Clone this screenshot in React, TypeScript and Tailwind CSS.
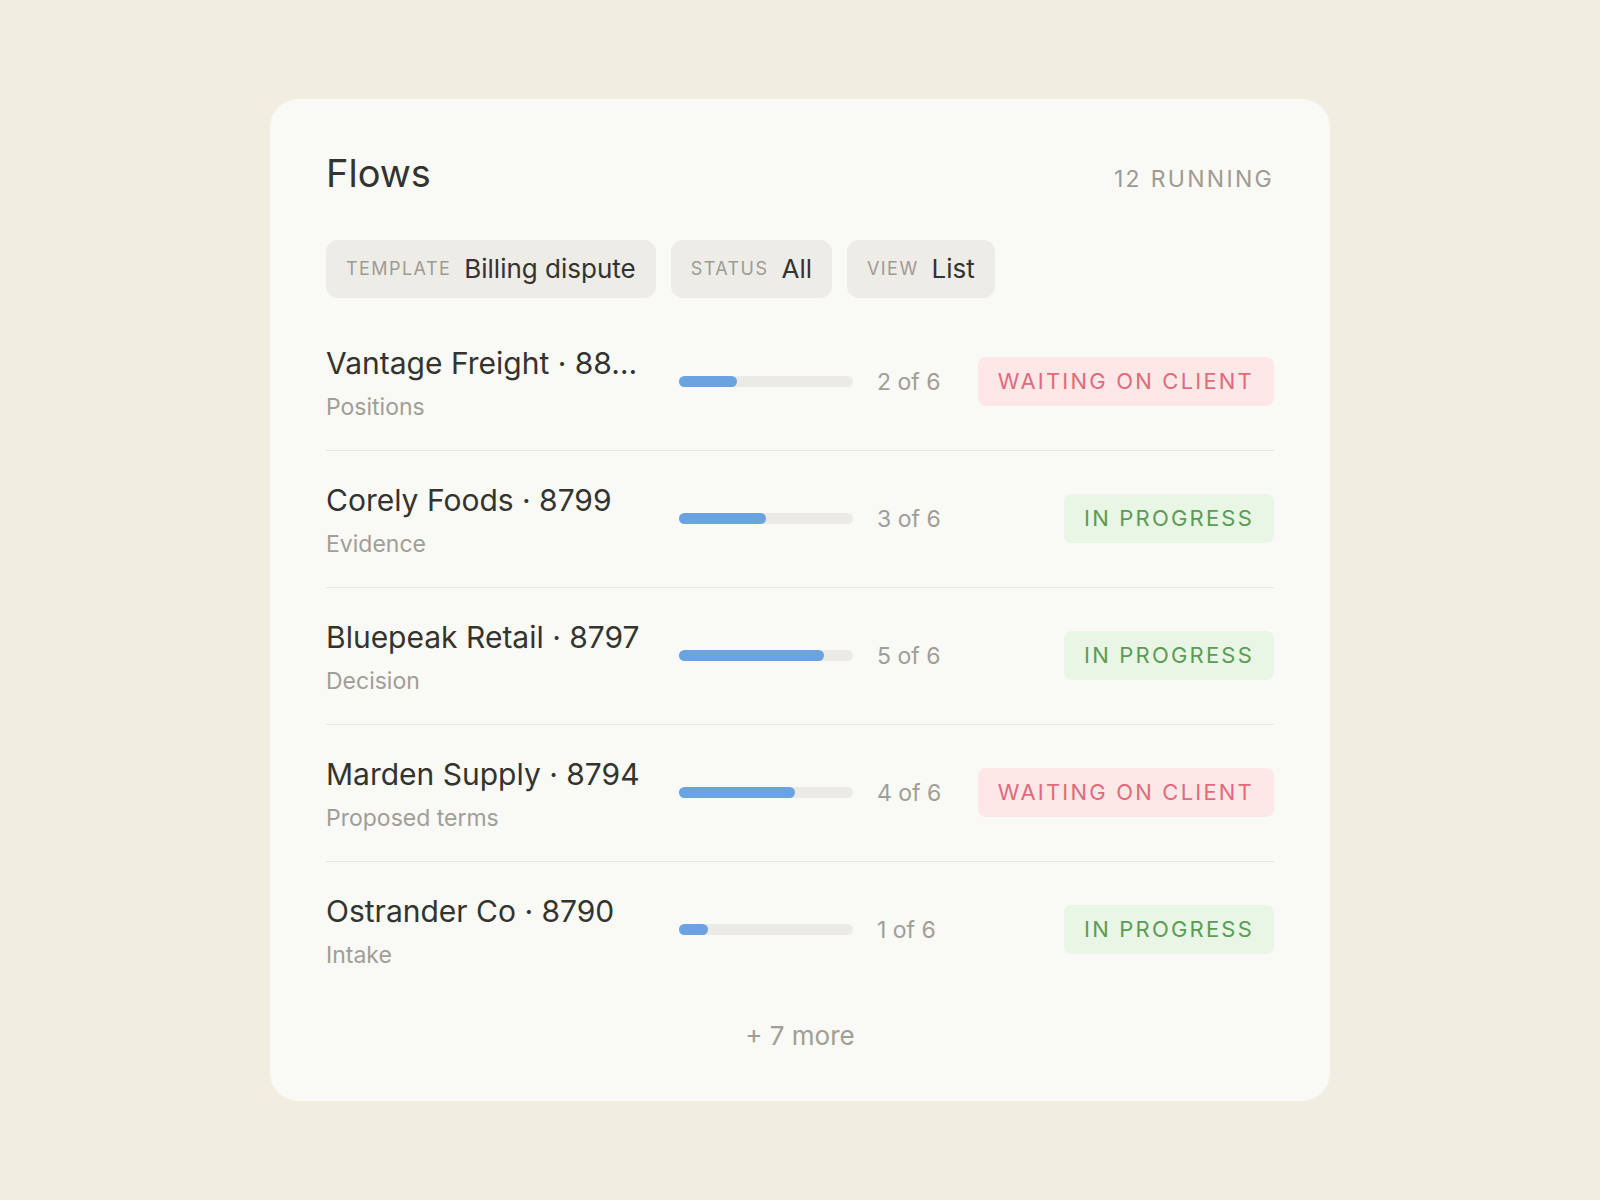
import React from 'react'

type Flow = {
  name: string
  step: string
  done: number
  status: 'waiting' | 'progress'
}

const flows: Flow[] = [
  { name: 'Vantage Freight · 88…', step: 'Positions', done: 2, status: 'waiting' },
  { name: 'Corely Foods · 8799', step: 'Evidence', done: 3, status: 'progress' },
  { name: 'Bluepeak Retail · 8797', step: 'Decision', done: 5, status: 'progress' },
  { name: 'Marden Supply · 8794', step: 'Proposed terms', done: 4, status: 'waiting' },
  { name: 'Ostrander Co · 8790', step: 'Intake', done: 1, status: 'progress' },
]

const TOTAL = 6

function Chip({ label, value }: { label: string; value: string }) {
  return (
    <div className="flex h-[58px] items-center gap-[13px] rounded-[12px] bg-[#edece7] px-[20px]">
      <span className="text-[18px] uppercase tracking-[0.08em] text-[#9d9b94]">{label}</span>
      <span className="text-[26px] text-[#33332f]">{value}</span>
    </div>
  )
}

function StatusBadge({ status }: { status: Flow['status'] }) {
  if (status === 'waiting') {
    return (
      <span className="flex h-[49px] items-center rounded-[8px] bg-[#fde8e7] px-[20px] text-[22px] tracking-[0.1em] text-[#e26a7b]">
        WAITING ON CLIENT
      </span>
    )
  }
  return (
    <span className="flex h-[49px] items-center rounded-[8px] bg-[#e9f5e5] px-[20px] text-[22px] tracking-[0.1em] text-[#5b9c54]">
      IN PROGRESS
    </span>
  )
}

export default function App() {
  return (
    <div
      className="flex min-h-screen items-center justify-center bg-[#f2ede1]"
      style={{ fontFamily: 'Inter, "Noto Sans", sans-serif' }}
    >
      <div className="w-[1060px] rounded-[28px] bg-[#f9f9f5] px-[56px] pt-[54px] pb-[47px]">
        {/* Header */}
        <div className="flex items-baseline justify-between">
          <h1 className="text-[38px] leading-[40px] text-[#33332f]">Flows</h1>
          <span className="text-[23px] tracking-[0.1em] text-[#9d9b94]">12 RUNNING</span>
        </div>

        {/* Filters */}
        <div className="mt-[43px] flex gap-[15px]">
          <Chip label="Template" value="Billing dispute" />
          <Chip label="Status" value="All" />
          <Chip label="View" value="List" />
        </div>

        {/* Rows */}
        <div className="mt-[16px]">
          {flows.map((f, i) => (
            <div
              key={f.name}
              className={`flex items-center pt-[30px] pb-[27px] ${i < flows.length - 1 ? 'border-b border-[#e6e5df]' : ''}`}
            >
              <div className="w-[330px] min-w-0">
                <p className="truncate text-[30px] leading-[38px] text-[#33332f]">{f.name}</p>
                <p className="mt-[9px] text-[23px] leading-[32px] text-[#a09e97]">{f.step}</p>
              </div>
              <div className="ml-[23px] -mt-[4px] h-[11px] w-[174px] rounded-full bg-[#ebeae6]">
                <div
                  className="h-full rounded-full bg-[#6ba3e0]"
                  style={{ width: `${(f.done / TOTAL) * 100}%` }}
                />
              </div>
              <span className="ml-[24px] -mt-[2px] text-[23px] text-[#a09e97]">
                {f.done} of {TOTAL}
              </span>
              <div className="-mt-[4px] flex flex-1 justify-end">
                <StatusBadge status={f.status} />
              </div>
            </div>
          ))}
        </div>

        {/* Footer */}
        <div className="pt-[20px] text-center text-[26px] leading-[36px] text-[#a09e97]">+ 7 more</div>
      </div>
    </div>
  )
}
